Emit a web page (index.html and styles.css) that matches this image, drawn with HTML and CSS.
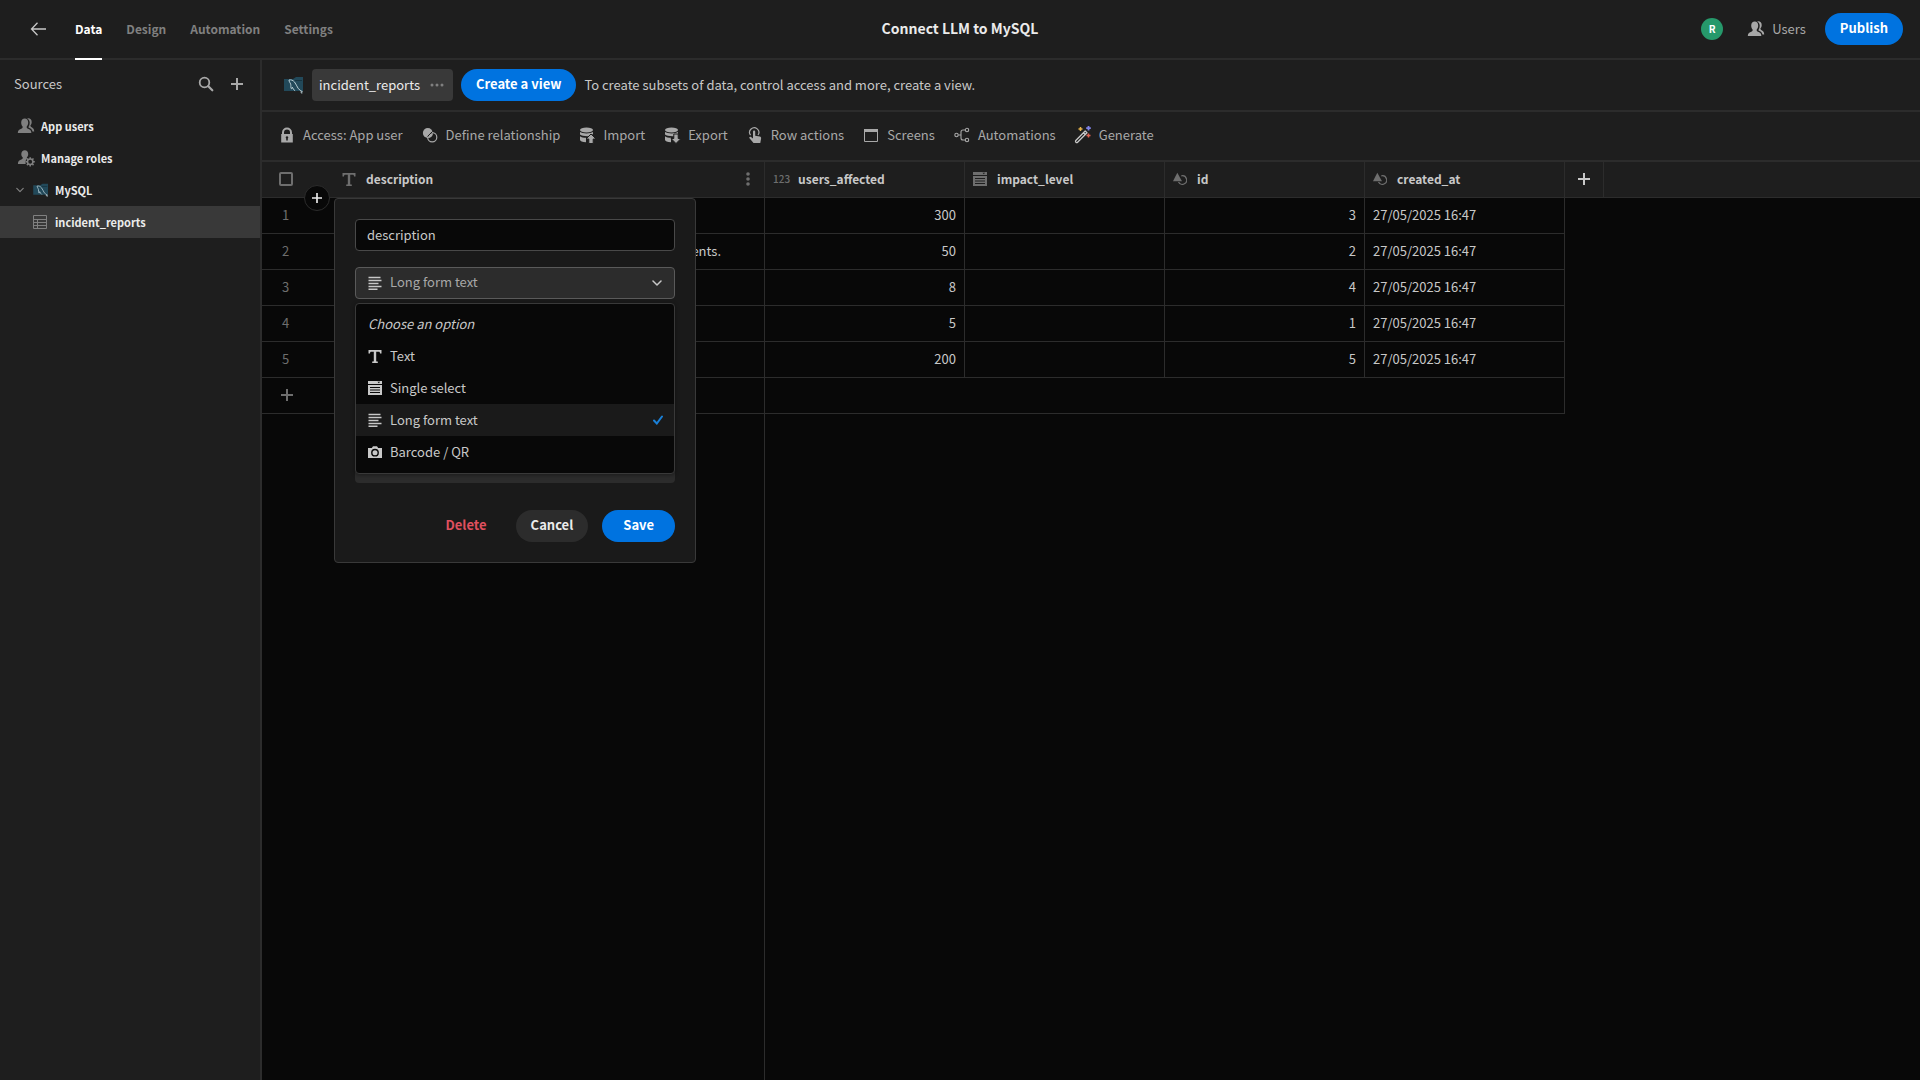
FILE: index.html
```html
<!DOCTYPE html>
<html lang="en">
<head>
    <meta charset="UTF-8">
    <meta name="viewport" content="width=device-width, initial-scale=1.0">
    <title>Connect LLM to MySQL</title>
    <link rel="stylesheet" href="styles.css">
</head>
<body>
    <!-- Shared icons -->
    <svg class="sprite" aria-hidden="true">
        <symbol id="i-users" viewBox="0 0 18 18">
            <path fill="currentColor" d="M7.800 1.600c2 0 3.400 1.500 3.400 3.900 0 1.700-.6 3.100-1.500 4v1c0 .5.3.7.8.9 2.400.8 3.900 1.800 3.900 4.600H.8c0-2.800 1.600-3.800 4-4.600.5-.2.8-.4.8-.9v-1c-.9-.9-1.400-2.300-1.400-4 0-2.400 1.500-3.900 3.600-3.900z"/>
            <path fill="currentColor" d="M10.200 1.500c2.500-.6 4.500.8 4.500 3.500 0 1.500-.5 2.700-1.300 3.600.1 1 .6 1.300 1.300 1.700 1.500.8 2.500 2 2.500 4.300h-1.700c-.4-2-1.700-3.200-4-4v-.6c.8-1.200 1.200-2.600 1.200-4.300 0-1.800-.9-3.300-2.500-4.200z"/>
        </symbol>
        <symbol id="i-roles" viewBox="0 0 18 18">
            <path fill="currentColor" d="M7.800 1.200c2 0 3.400 1.500 3.400 3.700 0 1.500-.5 2.600-1.300 3.400v1.400c-1.300 1.300-1.700 3.200-1.200 5.200H.9c0-3 1.600-3.900 4-4.700.5-.2.8-.5.8-.9v-1c-.9-.8-1.400-1.900-1.400-3.400 0-2.200 1.500-3.700 3.500-3.700z"/>
            <circle cx="13.200" cy="12.800" r="2.700" fill="none" stroke="currentColor" stroke-width="1.500"/>
            <path stroke="currentColor" stroke-width="1.500" d="M13.200 8.200v1.800M13.200 15.600v1.800M8.600 12.800h1.800M16 12.800h1.800M9.900 9.500l1.300 1.300M15.200 14.800l1.300 1.300M9.900 16.100l1.300-1.300M15.200 10.800l1.300-1.300"/>
        </symbol>
        <symbol id="i-mysql" viewBox="0 0 20 18">
            <path fill="#22495a" d="M0 3h9l3-2h7v14H0z"/>
            <path fill="none" stroke="#173542" d="M11 4.500h7"/>
            <path fill="none" stroke="#b8cdd4" stroke-width="1" d="M5 4c2-.6 4 .3 5.500 2 1.600 2 2.300 4.300 3.700 6.500 1 1.500 2.800 2 4.300 3.300l-1.800.3 1.600 1.600M5 4c-.1 1.600 1.200 2.600 1.700 4.200.4 1.600-.2 3.200.6 4.500.8.8.6-1 1-1.600.8 1.300 1.400 3 2.800 3.700"/>
        </symbol>
        <symbol id="i-table" viewBox="0 0 14 14">
            <path fill="none" stroke="currentColor" d="M.5.500h13v13H.5zM.5 4.500h13M.5 7.500h13M.5 10.500h13M4.500 4.500v9"/>
        </symbol>
        <symbol id="i-plus" viewBox="0 0 12 12">
            <path stroke="currentColor" stroke-width="2" d="M6 0v12M0 6h12"/>
        </symbol>
        <symbol id="i-chevron" viewBox="0 0 10 10">
            <path fill="none" stroke="currentColor" stroke-width="1.500" stroke-linecap="round" stroke-linejoin="round" d="M1 3l4 4 4-4"/>
        </symbol>
        <symbol id="i-text" viewBox="0 0 14 14">
            <path fill="currentColor" d="M.5 1h13v3.500h-1.500c0-1.300-.3-1.800-1.500-1.800H8.200v9.200c0 .5.500.6 1.600.7V14H4.200v-1.400c1.100-.1 1.600-.2 1.600-.7V2.700H3.500C2.300 2.700 2 3.200 2 4.500H.5z"/>
        </symbol>
        <symbol id="i-select" viewBox="0 0 14 14">
            <path fill="currentColor" fill-rule="evenodd" d="M0 0h14v3H0zM9.500.8l1.300 1.500L12.100.8zM0 4h14v10H0zM2 6v1h10V6zM2 8.500v1h10v-1zM2 11v1h10v-1z"/>
        </symbol>
        <symbol id="i-lines" viewBox="0 0 14 14">
            <path stroke="currentColor" stroke-width="1.500" d="M.5 1.500h12M.5 4.500h13M.5 7.500h10M.5 10.500h13M.5 13.200h9"/>
        </symbol>
        <symbol id="i-camera" viewBox="0 0 14 14">
            <path fill="currentColor" fill-rule="evenodd" d="M0 3h3.800L5 1.200h4L10.200 3H14v10H0zM7 3.800a3.900 3.900 0 1 0 0 7.800 3.900 3.900 0 0 0 0-7.800zM7 5.200a2.500 2.500 0 1 1 0 5 2.500 2.500 0 0 1 0-5z"/>
        </symbol>
        <symbol id="i-shapes" viewBox="0 0 14 14">
            <path fill="none" stroke="currentColor" stroke-width="1.200" d="M8.300 3.900A4.300 4.300 0 1 1 5.500 10"/>
            <path fill="currentColor" d="M4.300.8L9 9.200H0z"/>
        </symbol>
        <symbol id="i-db" viewBox="0 0 16 16">
            <ellipse cx="7.500" cy="3" rx="6.500" ry="2.400" fill="currentColor"/>
            <path fill="currentColor" d="M1 5c2.500 1.900 10.500 1.900 13 0v2.200c-2 0-3.400.8-4.600 2C5.500 9.300 2.300 8.800 1 7.500zM1 9.200c1.300 1 3.500 1.500 6 1.600v4.400c-3.500-.2-6-1-6-2.400z"/>
        </symbol>
    </svg>

    <header class="topbar">
        <div class="topbar-left">
            <a class="back" href="#" aria-label="Back">
                <svg class="icon-16" viewBox="0 0 16 16"><path fill="none" stroke="currentColor" stroke-width="1.300" d="M16 8H1.500M7.500 1.800L1.500 8l6 6.200"/></svg>
            </a>
            <nav class="tabs">
                <a class="tab active" href="#">Data</a>
                <a class="tab" href="#">Design</a>
                <a class="tab" href="#">Automation</a>
                <a class="tab" href="#">Settings</a>
            </nav>
        </div>
        <h1 class="app-title">Connect LLM to MySQL</h1>
        <div class="topbar-right">
            <span class="avatar">R</span>
            <button class="users-btn"><svg class="icon-18"><use href="#i-users"/></svg>Users</button>
            <button class="btn primary">Publish</button>
        </div>
    </header>

    <div class="layout">
        <aside class="sidebar">
            <div class="sidebar-header">
                <h2>Sources</h2>
                <button class="icon-btn" aria-label="Search">
                    <svg class="icon-16" viewBox="0 0 16 16"><circle cx="6.500" cy="6.500" r="4.800" fill="none" stroke="currentColor" stroke-width="1.800"/><path stroke="currentColor" stroke-width="2.200" stroke-linecap="round" d="M10.300 10.300l4 4"/></svg>
                </button>
                <button class="icon-btn" aria-label="Add source"><svg class="icon-12"><use href="#i-plus"/></svg></button>
            </div>
            <nav class="source-list">
                <a class="source" href="#"><svg class="icon-18"><use href="#i-users"/></svg>App users</a>
                <a class="source" href="#"><svg class="icon-18"><use href="#i-roles"/></svg>Manage roles</a>
                <a class="source" href="#"><svg class="caret"><use href="#i-chevron"/></svg><svg class="icon-mysql small"><use href="#i-mysql"/></svg>MySQL</a>
                <a class="source nested selected" href="#"><svg class="icon-14"><use href="#i-table"/></svg>incident_reports</a>
            </nav>
        </aside>

        <main class="content">
            <div class="viewbar">
                <svg class="icon-mysql"><use href="#i-mysql"/></svg>
                <button class="view-chip">incident_reports
                    <svg class="dots" viewBox="0 0 14 4"><g fill="currentColor"><circle cx="2" cy="2" r="1.500"/><circle cx="7" cy="2" r="1.500"/><circle cx="12" cy="2" r="1.500"/></g></svg>
                </button>
                <button class="btn primary">Create a view</button>
                <span class="view-hint">To create subsets of data, control access and more, create a view.</span>
            </div>

            <div class="toolbar">
                <button class="tool">
                    <svg class="icon-18" viewBox="0 0 18 18"><path fill="currentColor" fill-rule="evenodd" d="M4 8V6.500a5 5 0 0 1 10 0V8h.8v8.500H3.200V8zM6 8h6V6.500a3 3 0 0 0-6 0zM9 10.200a1.300 1.300 0 0 0-.8 2.300v2h1.600v-2a1.300 1.300 0 0 0-.8-2.300z"/></svg>
                    Access: App user
                </button>
                <button class="tool">
                    <svg class="icon-18" viewBox="0 0 18 18"><circle cx="6.800" cy="7" r="4.900" fill="currentColor"/><circle cx="11.200" cy="11.200" r="4.600" fill="#1e1e1e" stroke="currentColor" stroke-width="1.200"/><path fill="currentColor" d="M12 7.200a5.200 5.200 0 0 1-5 5 4.800 4.800 0 0 1 5-5z"/><path stroke="#1e1e1e" d="M6.500 10.500l5-5"/></svg>
                    Define relationship
                </button>
                <button class="tool">
                    <svg class="icon-18" viewBox="0 0 18 18"><use href="#i-db" x="1" y="1" width="16" height="16"/><path fill="currentColor" stroke="#1e1e1e" d="M13 8l5 5h-2.800v4.500h-4.400V13H8z"/></svg>
                    Import
                </button>
                <button class="tool">
                    <svg class="icon-18" viewBox="0 0 18 18"><use href="#i-db" x="1" y="1" width="16" height="16"/><path fill="currentColor" stroke="#1e1e1e" d="M10.800 8h4.400v4.500H18l-5 5-5-5h2.800z"/></svg>
                    Export
                </button>
                <button class="tool">
                    <svg class="icon-18" viewBox="0 0 18 18"><path fill="none" stroke="currentColor" stroke-width="1.200" d="M4.600 9.200A4.600 4.600 0 1 1 12 9"/><path fill="currentColor" d="M7 5.500c0-1.500 2.200-1.500 2.200 0v4.200l4.600.8c1 .2 1.500.9 1.300 1.900L14.300 17H7.500l-4-4.800c-.7-1 .5-2 1.500-1.300l2 1.500z"/></svg>
                    Row actions
                </button>
                <button class="tool">
                    <svg class="icon-18" viewBox="0 0 18 18"><path fill="none" stroke="currentColor" d="M2.500 3.500h13v12h-13z"/><path fill="currentColor" d="M2 3h14v3H2z"/></svg>
                    Screens
                </button>
                <button class="tool">
                    <svg class="icon-18" viewBox="0 0 18 18"><g fill="none" stroke="currentColor" stroke-width="1.100"><circle cx="3.500" cy="9" r="1.700"/><circle cx="14" cy="4" r="1.700"/><circle cx="14" cy="14" r="1.700"/><path d="M5.300 9H8M12.200 4H10Q8 4 8 6v6q0 2 2 2h2.200"/></g></svg>
                    Automations
                </button>
                <button class="tool">
                    <svg class="icon-18" viewBox="0 0 18 18"><path fill="none" stroke="#c8c8c8" stroke-width="1.300" stroke-linejoin="round" d="M1.800 14.500L11.200 5l1.800 1.800-9.400 9.400c-.5.5-1.200.5-1.700 0s-.5-1.200-.1-1.700zM9.500 6.800l1.800 1.800"/><path stroke="#e8b54a" stroke-width="1.500" d="M6.500 1v4M4.500 3h4"/><path stroke="#7f83e8" stroke-width="1.800" d="M14.500 0v4.500M12.200 2.200h4.600"/><path stroke="#e0604f" stroke-width="1.500" d="M14.500 7.500v4M12.500 9.500h4"/></svg>
                    Generate
                </button>
            </div>

            <div class="grid">
                <table class="data-table">
                    <colgroup>
                        <col class="col-gutter"><col class="col-sticky"><col class="col-data"><col class="col-data"><col class="col-data"><col class="col-data"><col class="col-add"><col>
                    </colgroup>
                    <thead>
                        <tr>
                            <th class="gutter"><input type="checkbox" class="check" aria-label="Select all rows"></th>
                            <th>
                                <div class="head"><svg class="icon-14"><use href="#i-text"/></svg>description
                                    <button class="more" aria-label="Column options"><svg class="dots-v" viewBox="0 0 4 14"><g fill="currentColor"><circle cx="2" cy="2" r="1.800"/><circle cx="2" cy="7" r="1.800"/><circle cx="2" cy="12" r="1.800"/></g></svg></button>
                                </div>
                            </th>
                            <th><div class="head"><span class="num-icon">123</span>users_affected</div></th>
                            <th><div class="head"><svg class="icon-14"><use href="#i-select"/></svg>impact_level</div></th>
                            <th><div class="head"><svg class="icon-14"><use href="#i-shapes"/></svg>id</div></th>
                            <th><div class="head"><svg class="icon-14"><use href="#i-shapes"/></svg>created_at</div></th>
                            <th><button class="add-col" aria-label="Add column"><svg class="icon-12"><use href="#i-plus"/></svg></button></th>
                            <th class="rest"></th>
                        </tr>
                    </thead>
                    <tbody>
                        <tr><td class="gutter">1</td><td></td><td class="num">300</td><td></td><td class="num">3</td><td>27/05/2025 16:47</td></tr>
                        <tr><td class="gutter">2</td><td class="tail">ents.</td><td class="num">50</td><td></td><td class="num">2</td><td>27/05/2025 16:47</td></tr>
                        <tr><td class="gutter">3</td><td></td><td class="num">8</td><td></td><td class="num">4</td><td>27/05/2025 16:47</td></tr>
                        <tr><td class="gutter">4</td><td></td><td class="num">5</td><td></td><td class="num">1</td><td>27/05/2025 16:47</td></tr>
                        <tr><td class="gutter">5</td><td></td><td class="num">200</td><td></td><td class="num">5</td><td>27/05/2025 16:47</td></tr>
                        <tr><td class="gutter"><button class="add-row" aria-label="Add row"><svg class="icon-12"><use href="#i-plus"/></svg></button></td><td></td><td colspan="4"></td></tr>
                    </tbody>
                </table>

                <button class="insert" aria-label="Insert row"><svg class="icon-10"><use href="#i-plus"/></svg></button>

                <form class="popover">
                    <input class="field" type="text" value="description" aria-label="Column name">
                    <div class="type-picker">
                        <svg class="icon-14 picker-icon"><use href="#i-lines"/></svg>
                        <select class="field picker" aria-label="Type">
                            <option>Text</option>
                            <option>Single select</option>
                            <option selected>Long form text</option>
                            <option>Barcode / QR</option>
                        </select>
                        <svg class="picker-caret"><use href="#i-chevron"/></svg>
                        <ul class="menu">
                            <li><button type="button" class="option placeholder">Choose an option</button></li>
                            <li><button type="button" class="option"><svg class="icon-14"><use href="#i-text"/></svg>Text</button></li>
                            <li><button type="button" class="option"><svg class="icon-14"><use href="#i-select"/></svg>Single select</button></li>
                            <li><button type="button" class="option current"><svg class="icon-14"><use href="#i-lines"/></svg>Long form text
                                <svg class="tick" viewBox="0 0 10 10"><path fill="none" stroke="currentColor" stroke-width="2" stroke-linecap="round" d="M1 5.500L3.800 8.500 9 1.500"/></svg></button></li>
                            <li><button type="button" class="option"><svg class="icon-14"><use href="#i-camera"/></svg>Barcode / QR</button></li>
                        </ul>
                    </div>
                    <div class="covered-field"></div>
                    <div class="actions">
                        <button type="button" class="btn danger">Delete</button>
                        <button type="button" class="btn secondary">Cancel</button>
                        <button type="button" class="btn primary save">Save</button>
                    </div>
                </form>
            </div>
        </main>
    </div>
</body>
</html>
```
FILE: styles.css
```css
* {
    box-sizing: border-box;
}
body {
    margin: 0;
    min-height: 100vh;
    display: flex;
    flex-direction: column;
    background-color: #1e1e1e;
    color: #c8c8c8;
    font-family: "Noto Sans CJK SC", "Noto Sans", sans-serif;
    font-size: 13px;
    line-height: 20px;
}
a {
    color: inherit;
    text-decoration: none;
}
button {
    font: inherit;
    color: inherit;
    background: none;
    border: none;
    padding: 0;
    cursor: pointer;
}
svg {
    display: block;
    flex: none;
}
.sprite {
    position: absolute;
    width: 0;
    height: 0;
}
.icon-10 { width: 10px; height: 10px; }
.icon-12 { width: 12px; height: 12px; }
.icon-14 { width: 14px; height: 14px; }
.icon-16 { width: 16px; height: 16px; }
.icon-18 { width: 18px; height: 18px; }
.icon-mysql {
    width: 20px;
    height: 18px;
}
.icon-mysql.small {
    width: 16px;
    height: 14px;
}

.btn {
    height: 32px;
    padding: 0 15px 2px;
    border-radius: 16px;
    font-weight: 700;
}
.primary {
    background-color: #0073e0;
    color: #fff;
}
.secondary {
    background-color: #2c2c2c;
    color: #ebebeb;
}
.danger {
    color: #e0505f;
}

/* Top bar */
.topbar {
    height: 60px;
    display: grid;
    grid-template-columns: 1fr auto 1fr;
    border-bottom: 2px solid #2c2c2c;
}
.topbar-left {
    display: flex;
    padding-left: 30px;
    gap: 29px;
}
.back {
    display: flex;
    align-items: center;
}
.tabs {
    display: flex;
    gap: 24px;
    margin-bottom: -2px;
}
.tab {
    display: flex;
    align-items: center;
    border-bottom: 2px solid transparent;
    color: #808080;
    font-size: 12px;
    font-weight: 700;
}
.tab.active {
    color: #fff;
    border-color: #fff;
}
.app-title {
    margin: 0;
    padding-bottom: 2px;
    align-self: center;
    color: #ebebeb;
    font-size: 14px;
    font-weight: 700;
}
.topbar-right {
    display: flex;
    align-items: center;
    justify-content: flex-end;
    padding-right: 17px;
}
.avatar {
    width: 22px;
    height: 22px;
    border-radius: 50%;
    background-color: #26996b;
    color: #fff;
    font-size: 10px;
    font-weight: 700;
    line-height: 22px;
    text-align: center;
    margin-right: 24px;
}
.users-btn {
    display: flex;
    align-items: center;
    gap: 7px;
    margin-right: 19px;
    color: #a8a8a8;
}

/* Sidebar */
.layout {
    flex: 1;
    display: flex;
}
.sidebar {
    width: 262px;
    flex: none;
    border-right: 2px solid #2c2c2c;
}
.sidebar-header {
    height: 50px;
    display: flex;
    align-items: center;
    gap: 17px;
    padding: 0 17px 2px 14px;
    color: #a8a8a8;
}
.sidebar-header h2 {
    margin: 0 auto 0 0;
    color: #c8c8c8;
    font-size: 13px;
    font-weight: 400;
}
.source {
    height: 32px;
    display: flex;
    align-items: center;
    gap: 6px;
    padding: 0 0 1px 17px;
    color: #ebebeb;
    font-size: 11px;
    font-weight: 700;
}
.source svg {
    color: #808080;
}
.caret {
    width: 8px;
    height: 8px;
    margin: 0 3px 0 -1px;
}
.source.nested {
    gap: 8px;
    padding-left: 33px;
}
.source.selected {
    background-color: #393939;
}

/* View bar and toolbar */
.content {
    flex: 1;
    min-width: 0;
    display: flex;
    flex-direction: column;
}
.viewbar {
    height: 52px;
    display: flex;
    align-items: center;
    gap: 8px;
    padding-left: 22px;
    border-bottom: 2px solid #2c2c2c;
}
.view-chip {
    height: 32px;
    display: flex;
    align-items: center;
    gap: 10px;
    padding: 0 9px 0 7px;
    border-radius: 4px;
    background-color: #393939;
    color: #ebebeb;
}
.dots {
    width: 14px;
    height: 4px;
    color: #808080;
}
.toolbar {
    height: 50px;
    display: flex;
    align-items: center;
    gap: 18px;
    padding: 0 16px 2px;
    border-bottom: 2px solid #2c2c2c;
}
.tool {
    display: flex;
    align-items: center;
    gap: 7px;
    color: #a8a8a8;
    white-space: nowrap;
}

/* Data grid, the line under the sticky column runs to the bottom */
.grid {
    flex: 1;
    position: relative;
    background: linear-gradient(#2c2c2c, #2c2c2c) 502px 0 / 1px 100% no-repeat #080808;
}
.data-table {
    width: 100%;
    table-layout: fixed;
    border-spacing: 0;
}
.col-gutter { width: 72px; }
.col-sticky { width: 431px; }
.col-data { width: 200px; }
.col-add { width: 39px; }
.data-table th,
.data-table td {
    height: 36px;
    padding: 0 8px 1px;
    border-right: 1px solid #2c2c2c;
    border-bottom: 1px solid #2c2c2c;
}
.data-table th {
    background-color: #1e1e1e;
    text-align: left;
    font-size: 12px;
    font-weight: 700;
}
.data-table .rest {
    border-right: none;
}
.data-table .gutter {
    padding-left: 17px;
    border-right: none;
    color: #6e6e6e;
}
.data-table td.gutter {
    padding-left: 20px;
}
.data-table .num {
    text-align: right;
}
.data-table .tail {
    padding-right: 43px;
    text-align: right;
}
.check {
    appearance: none;
    display: block;
    width: 14px;
    height: 14px;
    margin: 0;
    border: 2px solid #6e6e6e;
    border-radius: 2px;
}
.head {
    display: flex;
    align-items: center;
    gap: 10px;
}
.head svg,
.num-icon {
    color: #6e6e6e;
}
.num-icon {
    font-size: 10px;
    font-weight: 500;
    margin-right: -2px;
}
.more {
    margin-left: auto;
    padding: 0 6px;
}
.dots-v {
    width: 4px;
    height: 14px;
}
.add-col {
    display: block;
    margin: 0 auto;
}
.add-row {
    display: block;
    margin-left: -1px;
}
.insert {
    position: absolute;
    top: 23px;
    left: 42px;
    width: 26px;
    height: 26px;
    display: flex;
    align-items: center;
    justify-content: center;
    border: 1px solid #2c2c2c;
    border-radius: 50%;
    background-color: #080808;
    color: #ebebeb;
}

/* Column editor */
.popover {
    position: absolute;
    top: 36px;
    left: 72px;
    width: 362px;
    padding: 20px;
    border: 1px solid #393939;
    border-radius: 4px;
    background-color: #1a1a1a;
}
.field {
    display: block;
    width: 100%;
    height: 32px;
    padding: 0 11px 2px;
    border: 1px solid #494949;
    border-radius: 4px;
    background-color: #080808;
    color: #c8c8c8;
    font: inherit;
}
.type-picker {
    position: relative;
    margin-top: 16px;
}
.picker {
    appearance: none;
    padding-left: 34px;
    border-color: #5a5a5a;
    background-color: #2c2c2c;
    color: #a8a8a8;
}
.picker-icon {
    position: absolute;
    top: 9px;
    left: 13px;
}
.picker-caret {
    position: absolute;
    top: 11px;
    right: 13px;
    width: 10px;
    height: 10px;
}
.menu {
    position: absolute;
    top: 36px;
    left: 0;
    right: 0;
    margin: 0;
    padding: 4px 0 5px;
    list-style: none;
    border: 1px solid #393939;
    border-radius: 4px;
    background-color: #080808;
    box-shadow: 0 1px 4px rgba(0, 0, 0, 0.4);
}
.option {
    width: 100%;
    height: 32px;
    display: flex;
    align-items: center;
    gap: 8px;
    padding: 0 11px 1px 12px;
}
.placeholder {
    font-style: italic;
}
.current {
    background-color: #1a1a1a;
}
.tick {
    width: 10px;
    height: 10px;
    margin-left: auto;
    color: #1a80d8;
}
.covered-field {
    height: 32px;
    margin-top: 152px;
    border-radius: 4px;
    background-color: #2c2c2c;
}
.actions {
    display: flex;
    justify-content: flex-end;
    gap: 14px;
    margin-top: 27px;
}
.save {
    padding: 0 21px 2px;
}
```
